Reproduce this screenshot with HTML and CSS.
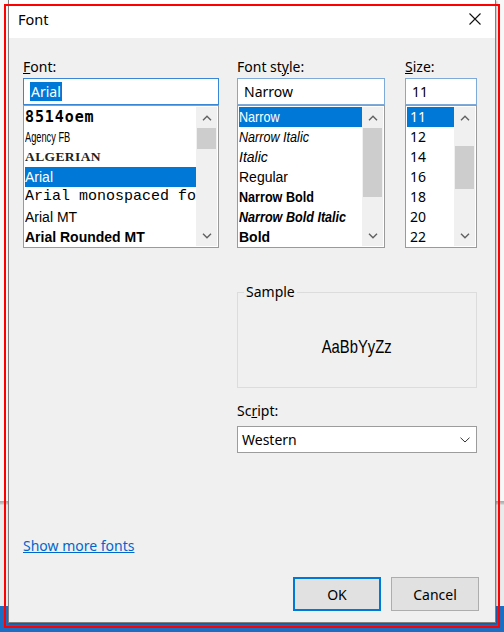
FILE: index.html
```html
<!DOCTYPE html>
<html>
<head>
<meta charset="utf-8">
<title>Font</title>
<link rel="stylesheet" href="styles.css">
</head>
<body>
<div class="screen">
  <div class="dialog">
    <div class="titlebar">
      <span class="title">Font</span>
      <span class="close"><svg width="12" height="12" viewBox="0 0 12 12"><path d="M0.5 0.5 L11.5 11.5 M11.5 0.5 L0.5 11.5" stroke="#111" stroke-width="1.1" fill="none"/></svg></span>
    </div>
    <div class="content">
      <div class="pickers">
        <div class="picker picker-font">
          <div class="lbl"><u>F</u>ont:</div>
          <div class="edit edit-focus"><span class="sel">Arial</span></div>
          <div class="list">
            <div class="items">
              <div class="item f-oem">8514oem</div>
              <div class="item f-agency"><span>Agency FB</span></div>
              <div class="item f-alg">ALGERIAN</div>
              <div class="item selected f-arial">Arial</div>
              <div class="item f-mono">Arial monospaced fo</div>
              <div class="item f-arial">Arial MT</div>
              <div class="item f-arial-bold">Arial Rounded MT</div>
            </div>
            <div class="vscroll">
              <div class="arrow"><svg width="10" height="6" viewBox="0 0 10 6"><path d="M1 5.2 L5 1.2 L9 5.2" fill="none" stroke="#606060" stroke-width="1.4"/></svg></div>
              <div class="track"><div class="thumb" style="margin-top:0px;height:21px"></div></div>
              <div class="arrow"><svg width="10" height="6" viewBox="0 0 10 6"><path d="M1 0.8 L5 4.8 L9 0.8" fill="none" stroke="#606060" stroke-width="1.4"/></svg></div>
            </div>
          </div>
        </div>

        <div class="picker picker-style">
          <div class="lbl">Font st<u>y</u>le:</div>
          <div class="edit"><span class="val">Narrow</span></div>
          <div class="list">
            <div class="items">
              <div class="item selected s-narrow"><span>Narrow</span></div>
              <div class="item s-narrow s-italic"><span>Narrow Italic</span></div>
              <div class="item s-arial s-italic">Italic</div>
              <div class="item s-arial">Regular</div>
              <div class="item s-narrow s-bold"><span>Narrow Bold</span></div>
              <div class="item s-narrow s-bold s-italic"><span>Narrow Bold Italic</span></div>
              <div class="item s-arial s-bold">Bold</div>
            </div>
            <div class="vscroll">
              <div class="arrow"><svg width="10" height="6" viewBox="0 0 10 6"><path d="M1 5.2 L5 1.2 L9 5.2" fill="none" stroke="#606060" stroke-width="1.4"/></svg></div>
              <div class="track"><div class="thumb" style="margin-top:0px;height:69px"></div></div>
              <div class="arrow"><svg width="10" height="6" viewBox="0 0 10 6"><path d="M1 0.8 L5 4.8 L9 0.8" fill="none" stroke="#606060" stroke-width="1.4"/></svg></div>
            </div>
          </div>
        </div>

        <div class="picker picker-size">
          <div class="lbl"><u>S</u>ize:</div>
          <div class="edit"><span class="val">11</span></div>
          <div class="list">
            <div class="items">
              <div class="item selected sz">11</div>
              <div class="item sz">12</div>
              <div class="item sz">14</div>
              <div class="item sz">16</div>
              <div class="item sz">18</div>
              <div class="item sz">20</div>
              <div class="item sz">22</div>
            </div>
            <div class="vscroll">
              <div class="arrow"><svg width="10" height="6" viewBox="0 0 10 6"><path d="M1 5.2 L5 1.2 L9 5.2" fill="none" stroke="#606060" stroke-width="1.4"/></svg></div>
              <div class="track"><div class="thumb" style="margin-top:18px;height:43px"></div></div>
              <div class="arrow"><svg width="10" height="6" viewBox="0 0 10 6"><path d="M1 0.8 L5 4.8 L9 0.8" fill="none" stroke="#606060" stroke-width="1.4"/></svg></div>
            </div>
          </div>
        </div>
      </div>

      <div class="right">
        <fieldset class="group">
          <legend>Sample</legend>
          <div class="sample"><span>AaBbYyZz</span></div>
        </fieldset>
        <div class="lbl script-lbl">Sc<u>r</u>ipt:</div>
        <div class="combo">
          <span>Western</span>
          <svg width="10" height="6" viewBox="0 0 10 6"><path d="M0.5 0.7 L5 5 L9.5 0.7" fill="none" stroke="#333" stroke-width="1"/></svg>
        </div>
      </div>

      <div class="footer">
        <a class="link" href="#">Show more fonts</a>
        <div class="buttons">
          <button class="btn btn-default">OK</button>
          <button class="btn">Cancel</button>
        </div>
      </div>
    </div>
  </div>
  <div class="frame"></div>
</div>
</body>
</html>
```

FILE: styles.css
```css
html, body {
  margin: 0;
  padding: 0;
}

body {
  font-family: "Noto Sans", "Open Sans", sans-serif;
  font-size: 14px;
  color: #000;
}

.screen {
  position: relative;
  width: 504px;
  height: 632px;
  overflow: hidden;
  background: linear-gradient(to bottom, #f8f8f8 0, #f8f8f8 501px, #a8a8a8 501px, #c8c8c8 504px, #ebebeb 505px, #ebebeb 606px, #1b6ec2 606px);
}

.frame {
  position: absolute;
  left: 4px;
  top: 4px;
  width: 496px;
  height: 624px;
  border: 2px solid #ff0000;
  box-sizing: border-box;
  pointer-events: none;
}

.dialog {
  margin-left: 8px;
  width: 488px;
  height: 623px;
  box-sizing: border-box;
  border: 1px solid #808080;
  border-top: none;
  display: flex;
  flex-direction: column;
  box-shadow: 1px 1px 2px rgba(0, 0, 0, 0.25);
}

.titlebar {
  height: 38px;
  flex: none;
  background: #ffffff;
  display: flex;
  align-items: center;
  justify-content: space-between;
  padding: 0 14px 0 9px;
}

.title {
  font-size: 14.5px;
  line-height: 20px;
  padding-bottom: 1px;
}

.close {
  display: flex;
  width: 12px;
  height: 12px;
}

.content {
  flex: 1;
  display: flex;
  flex-direction: column;
  background: #f0f0f0;
  padding: 19px 16px 11px 14px;
}

.pickers {
  display: flex;
}

.picker-font { width: 196px; }
.picker-style { width: 148px; margin-left: 18px; }
.picker-size { width: 72px; margin-left: 20px; }

.lbl {
  height: 20px;
  line-height: 20px;
  margin-bottom: 1px;
  white-space: nowrap;
}

.edit {
  height: 27px;
  box-sizing: border-box;
  border: 1px solid #7fa9d9;
  background: #ffffff;
  padding-left: 6px;
  display: flex;
  align-items: center;
  white-space: nowrap;
}

.edit-focus {
  border-color: #3a86d6;
}

.edit .val {
  line-height: 19px;
}

.sel {
  background: #0078d7;
  color: #ffffff;
  line-height: 19px;
  padding: 0 1px;
}

.list {
  height: 143px;
  box-sizing: border-box;
  border: 1px solid #9a9a9a;
  background: #ffffff;
  padding: 1px;
  display: flex;
}

.items {
  flex: 1;
  min-width: 0;
  overflow: hidden;
}

.item {
  height: 20px;
  line-height: 20px;
  white-space: nowrap;
  overflow: hidden;
}

.item.selected {
  background: #0078d7;
  color: #ffffff;
}

.f-oem {
  font-family: "DejaVu Sans Mono", monospace;
  font-weight: bold;
  font-size: 15px;
  letter-spacing: 0.9px;
}

.f-agency span {
  display: inline-block;
  font-family: "Liberation Sans", sans-serif;
  font-size: 14px;
  transform: scaleX(0.66);
  transform-origin: left center;
}

.f-alg {
  font-family: "Liberation Serif", serif;
  font-weight: bold;
  font-size: 13.5px;
  letter-spacing: 0.4px;
  color: #222;
}

.f-arial {
  font-family: "Liberation Sans", Arial, sans-serif;
  font-size: 14px;
}

.f-mono {
  font-family: "Liberation Mono", monospace;
  font-size: 15px;
}

.f-arial-bold {
  font-family: "Liberation Sans", Arial, sans-serif;
  font-size: 14px;
  font-weight: bold;
}

.s-narrow {
  font-family: "Liberation Sans", Arial, sans-serif;
  font-size: 15px;
}

.s-narrow span {
  display: inline-block;
  transform: scaleX(0.84);
  transform-origin: left center;
}

.s-arial {
  font-family: "Liberation Sans", Arial, sans-serif;
  font-size: 14px;
}

.s-italic { font-style: italic; }
.s-bold { font-weight: bold; }

.sz {
  padding-left: 3px;
}

.vscroll {
  width: 21px;
  flex: none;
  display: flex;
  flex-direction: column;
  background: #f0f0f0;
}

.arrow {
  height: 21px;
  flex: none;
  display: flex;
  align-items: center;
  justify-content: center;
}

.track {
  flex: 1;
}

.thumb {
  background: #cdcdcd;
  margin-left: 1px;
  margin-right: 1px;
}

.right {
  margin-left: 214px;
  margin-top: 34px;
  width: 240px;
}

.group {
  margin: 0;
  padding: 0 6px;
  border: 1px solid #dcdcdc;
  height: 106px;
  box-sizing: border-box;
  min-width: 0;
}

.group legend {
  padding: 0 2px;
  line-height: 20px;
  font-size: 14px;
}

.sample {
  height: 84px;
  padding-top: 6px;
  box-sizing: border-box;
  display: flex;
  align-items: center;
  justify-content: center;
  font-family: "Liberation Sans", Arial, sans-serif;
  font-size: 18.5px;
}

.sample span {
  display: inline-block;
  transform: scaleX(0.8);
  transform-origin: center center;
}

.script-lbl {
  margin-top: 13px;
  margin-bottom: 5px;
}

.combo {
  height: 27px;
  box-sizing: border-box;
  border: 1px solid #9c9c9c;
  background: #ffffff;
  display: flex;
  align-items: center;
  justify-content: space-between;
  padding: 0 6px 0 4px;
}

.footer {
  margin-top: auto;
}

.link {
  display: inline-block;
  line-height: 20px;
  color: #0066cc;
  text-decoration: underline;
}

.buttons {
  margin-top: 21px;
  display: flex;
  justify-content: flex-end;
  gap: 10px;
}

.btn {
  width: 88px;
  height: 34px;
  box-sizing: border-box;
  background: #e1e1e1;
  border: 1px solid #adadad;
  font-family: "Noto Sans", "Open Sans", sans-serif;
  font-size: 14px;
  color: #000;
  padding: 0;
}

.btn-default {
  border: 2px solid #0078d7;
}
```
